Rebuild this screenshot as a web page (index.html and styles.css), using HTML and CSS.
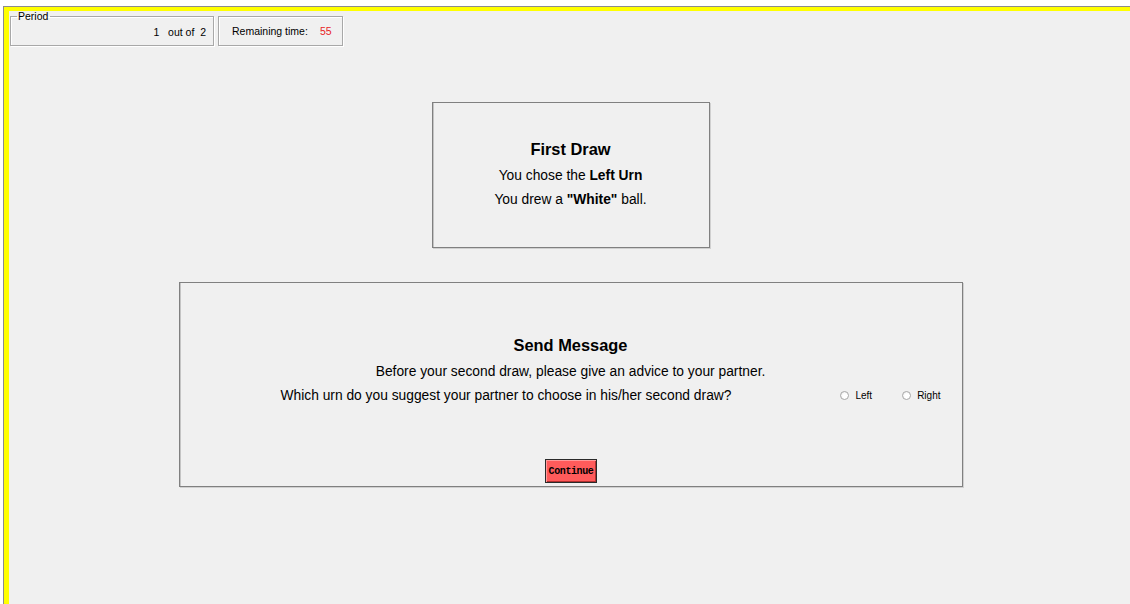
FILE: index.html
```html
<!DOCTYPE html>
<html lang="en">
<head>
<meta charset="utf-8">
<title>Send Message</title>
<link rel="stylesheet" href="styles.css">
</head>
<body>
<div class="frame">
  <div class="screen">
    <header class="status">
      <fieldset class="period">
        <legend>Period</legend>
        <div class="period-value">1&nbsp;&nbsp;&nbsp;out of&nbsp;&nbsp;2</div>
      </fieldset>
      <div class="timer">
        <span class="timer-label">Remaining time:</span>
        <span class="timer-value">55</span>
      </div>
    </header>

    <section class="card draw">
      <h2 class="card-title">First Draw</h2>
      <p class="line">You chose the <b>Left Urn</b></p>
      <p class="line">You drew a <b>"White"</b> ball.</p>
    </section>

    <section class="card message">
      <h2 class="card-title">Send Message</h2>
      <p class="line">Before your second draw, please give an advice to your partner.</p>
      <div class="question">
        <span class="line">Which urn do you suggest your partner to choose in his/her second draw?</span>
        <div class="choices">
          <label class="choice"><span class="radio"></span>Left</label>
          <label class="choice"><span class="radio"></span>Right</label>
        </div>
      </div>
      <div class="actions">
        <button class="continue" type="button">Continue</button>
      </div>
    </section>
  </div>
</div>
</body>
</html>
```

FILE: styles.css
```css
html, body {
  margin: 0;
  padding: 0;
  background: #ffffff;
  font-family: "Liberation Sans", Arial, sans-serif;
  color: #000;
  overflow: hidden;
}

.frame {
  margin: 6px 0 0 3px;
  border-top: 1px solid #8c8c8c;
  border-left: 1px solid #8c8c8c;
}

.screen {
  border-top: 4px solid #ffff00;
  border-left: 5px solid #ffff00;
  background: #f0f0f0;
  height: 620px;
  display: flex;
  flex-direction: column;
  align-items: center;
}

/* top status strip */
.status {
  align-self: stretch;
  display: flex;
  align-items: flex-end;
  gap: 4px;
  padding-left: 1px;
  font-size: 10.5px;
}

.period {
  margin: 0;
  padding: 0 7px 0 0;
  width: 204px;
  height: 35px;
  box-sizing: border-box;
  border: 1px solid #a8a8a8;
  box-shadow: inset 1px 1px 0 #ffffff, 1px 1px 0 #ffffff;
  min-width: 0;
}

.period legend {
  margin-left: 6px;
  padding: 0 2px 0 1px;
  font-size: 10.5px;
  line-height: 11px;
}

.period-value {
  text-align: right;
  line-height: 14px;
  padding-top: 3px;
}

.timer {
  width: 125px;
  height: 30px;
  box-sizing: border-box;
  border: 1px solid #a8a8a8;
  box-shadow: inset 1px 1px 0 #ffffff, 1px 1px 0 #ffffff;
  display: flex;
  align-items: center;
  padding-left: 13px;
}

.timer-value {
  color: #e8231f;
  margin-left: 12px;
}

/* content cards */
.card {
  box-sizing: border-box;
  border: 1px solid #808080;
  box-shadow: inset 1px 0 0 #c4c4c4, 1px 1px 0 #d0d0d0;
  text-align: center;
  margin-left: 2px;
}

.card-title {
  margin: 0;
  font-size: 16.4px;
  line-height: 20px;
  font-weight: bold;
}

.line {
  margin: 0;
  font-size: 13.8px;
  line-height: 24px;
}

.draw {
  width: 278px;
  height: 146px;
  margin-top: 56px;
  padding-top: 36px;
}

.draw .card-title {
  margin-bottom: 5px;
}

.message {
  width: 784px;
  height: 205px;
  margin-top: 34px;
  padding-top: 52px;
}

.message .card-title {
  margin-bottom: 5px;
}

.question {
  display: flex;
  align-items: center;
  padding-left: 101px;
  text-align: left;
}

.choices {
  margin-left: auto;
  display: flex;
  gap: 30px;
  padding-right: 21px;
  font-size: 10px;
  margin-top: -1px;
}

.choice {
  display: flex;
  align-items: center;
  gap: 6px;
}

.radio {
  width: 7px;
  height: 7px;
  border: 1px solid #a8a8a8;
  border-radius: 50%;
  background: radial-gradient(circle at 60% 60%, #ffffff 40%, #e4e4e4 100%);
}

.actions {
  margin-top: 51px;
  display: flex;
  justify-content: center;
}

.continue {
  width: 52px;
  height: 24px;
  margin-left: 1px;
  padding: 0;
  background: #ff5b5b;
  border: 1px solid #2a2a2a;
  box-shadow: inset 1px 1px 0 #ff9a9a, inset -1px -1px 0 #b03030;
  font-family: "Liberation Mono", "DejaVu Sans Mono", monospace;
  font-weight: bold;
  font-size: 10px;
  color: #000;
  letter-spacing: -0.4px;
}
```
